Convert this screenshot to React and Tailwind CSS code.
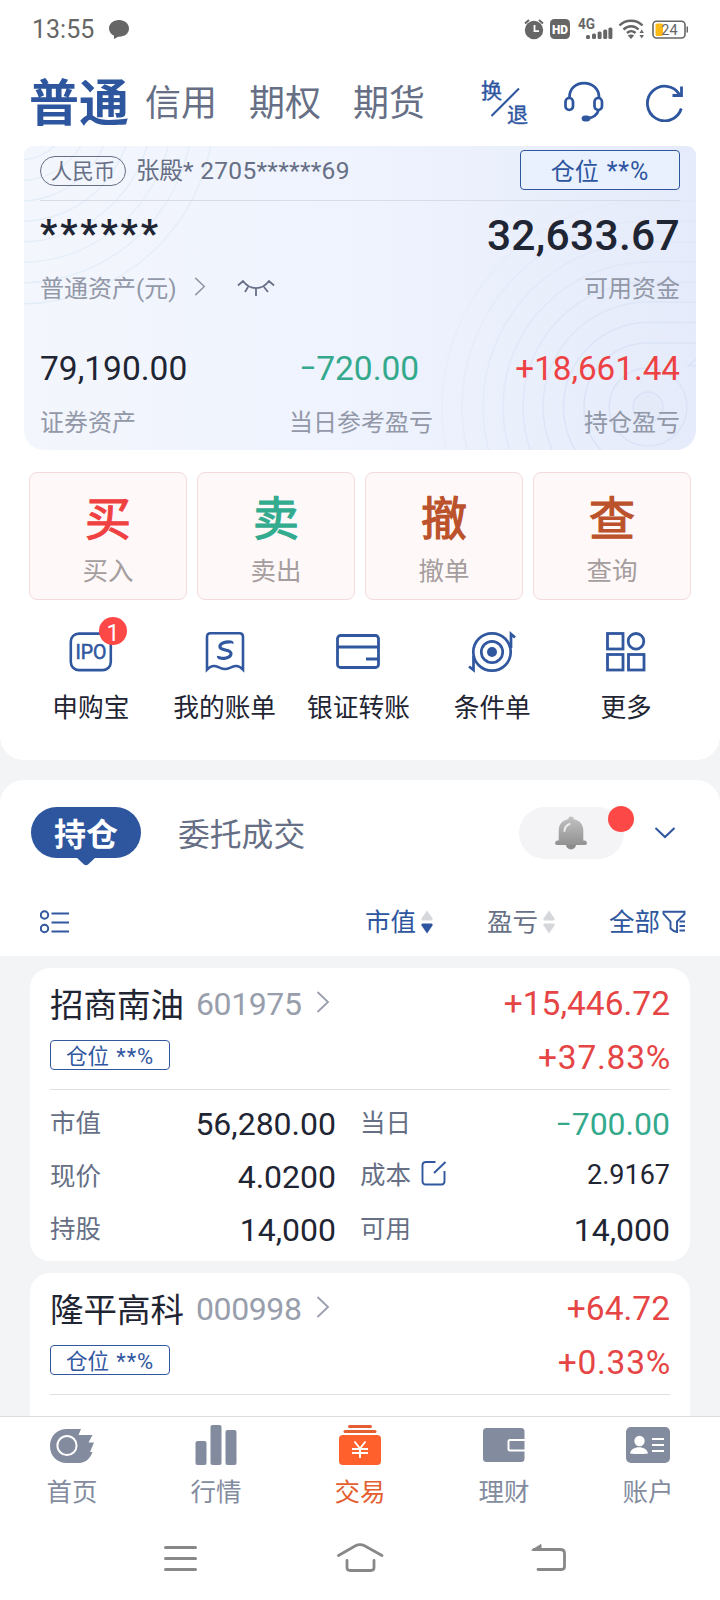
const Minus = () => (
  <span className="inline-block w-[0.46em] text-left">
    <span className="inline-block origin-left scale-x-150 -translate-y-[2px]">-</span>
  </span>
);

const Amount = ({ value }) =>
  value.startsWith('-') ? (
    <>
      <Minus />
      {value.slice(1)}
    </>
  ) : (
    value
  );

const ChevronRight = ({ className }) => (
  <svg viewBox="0 0 14 24" fill="none" stroke="currentColor" strokeWidth="1.8" className={className}>
    <path d="M1.5 2 L12 12 L1.5 22" />
  </svg>
);

const StatusBar = () => (
  <div className="flex h-[58px] items-center justify-between pl-8 pr-8 text-[#666]">
    <div className="flex items-center">
      <span className="text-[25px] leading-none">13:55</span>
      <svg viewBox="0 0 22 21" className="ml-[14px] h-[21px] w-[22px]" fill="currentColor">
        <path d="M11 1C5 1 1 4.800 1 9.500c0 3.300 2 5.800 5 7.300V20l4.200-2.300C16.500 18 21 14.500 21 9.500 21 4.800 17 1 11 1z" />
      </svg>
    </div>
    <svg viewBox="0 0 166 24" className="h-6 w-[166px]" fill="currentColor">
      <circle cx="12" cy="13" r="9.200" />
      <path d="M3 6.500l4-3.500M21 6.500l-4-3.500" stroke="currentColor" strokeWidth="2" />
      <path d="M12.500 8v6.200h4.500" fill="none" stroke="#fff" strokeWidth="1.800" />
      <rect x="28" y="2" width="20" height="20" rx="4.500" />
      <text x="38" y="16.600" fill="#fff" fontSize="13" fontWeight="900" textAnchor="middle" textLength="16" lengthAdjust="spacingAndGlyphs">HD</text>
      <text x="56" y="11.800" fontSize="14" fontWeight="700" textLength="17" lengthAdjust="spacingAndGlyphs">4G</text>
      <rect x="64" y="18" width="4" height="4" rx="1.500" />
      <rect x="70" y="16.500" width="4" height="5.500" rx="1.500" />
      <rect x="75.600" y="14.500" width="4" height="7.500" rx="1.500" />
      <rect x="81.200" y="12.500" width="4" height="9.500" rx="1.500" />
      <rect x="86.400" y="10.500" width="4" height="11.500" rx="1.500" />
      <g fill="none" stroke="currentColor" strokeWidth="2.500">
        <path d="M97.500 8.500C103.500 2 114.500 2 120.500 8.500" />
        <path d="M101.500 12.500C106 8 112.500 8 116.500 12.500" />
        <path d="M105 16C107.500 13.700 111 13.700 113.500 16" />
      </g>
      <path d="M109 22l-3.200-3.500c2-1.500 4.400-1.500 6.400 0z" />
      <path d="M117.500 16l2.200-3.500 2.200 3.500zM117.500 18l2.200 3.500 2.200-3.500z" />
      <rect x="131" y="4.200" width="32" height="16.800" rx="3.500" fill="none" stroke="currentColor" strokeWidth="1.600" />
      <rect x="133.500" y="6.500" width="7.500" height="12.500" rx="1.500" fill="#fdb915" />
      <path d="M165.300 9.500v6" stroke="currentColor" strokeWidth="1.500" />
      <text x="147.500" y="17.800" fontSize="14.500" textAnchor="middle">24</text>
    </svg>
  </div>
);

const Header = () => (
  <div className="flex h-[88px] items-center pl-[29px] pr-9 text-[#666f85]">
    <span className="mt-[3px] text-[50px] font-bold leading-none text-[#2e569f]">普通</span>
    <span className="ml-4 mt-1 text-[36px] leading-none">信用</span>
    <span className="ml-8 mt-1 text-[36px] leading-none">期权</span>
    <span className="ml-8 mt-1 text-[36px] leading-none">期货</span>
    <div className="ml-auto flex items-center text-[#2e569f]">
      <svg viewBox="0 0 54 50" className="-mr-1 h-[50px] w-[54px]" fill="currentColor" stroke="currentColor">
        <text x="0" y="21" fontSize="21" strokeWidth="0.400">换</text>
        <text x="26" y="45" fontSize="21" strokeWidth="0.400">退</text>
        <path d="M10.500 39 L38 11.500" strokeWidth="2" />
      </svg>
      <svg viewBox="0 0 40 42" className="ml-[33px] h-[42px] w-10" fill="none" stroke="currentColor" strokeWidth="2.700">
        <path d="M5.500 17V16C5.500 8 11.500 2.200 20 2.200S35 8 35 16v1" />
        <rect x="1.500" y="17" width="7.500" height="12" rx="3.700" />
        <rect x="30.500" y="17" width="7.500" height="12" rx="3.700" />
        <path d="M34.500 29C33.500 34 29 36.500 23 37.500" />
        <rect x="18" y="35" width="8" height="5" rx="2.500" fill="currentColor" strokeWidth="1" />
      </svg>
      <svg viewBox="0 0 38 40" className="ml-[42px] h-10 w-[38px]" fill="none" stroke="currentColor" strokeWidth="2.800">
        <path d="M35.300 26.500A17.300 17.300 0 1 1 33.500 12.500" />
        <path d="M35.500 4.500V13.500H26.500" />
      </svg>
    </div>
  </div>
);

const cornerRings = [50, 70.5, 91, 111.5, 132, 152.5, 173, 194];
const pitchRings = [64, 84.5, 105, 125, 145, 165, 186, 206];

const CardPattern = () => (
  <svg viewBox="0 0 672 304" className="absolute inset-0 h-full w-full" fill="none">
    <g stroke="#e3edf8" strokeWidth="1.200">
      {cornerRings.map((r) => (
        <circle key={r} cx="-4" cy="-36" r={r} />
      ))}
    </g>
    <g stroke="#dae3f6" strokeWidth="1.500">
      <circle cx="624" cy="261" r="15" fill="#e5eaf9" />
      <circle cx="624" cy="261" r="39" />
      {pitchRings.map((r, i) => (
        <path
          key={r}
          opacity={1 - i * 0.11}
          d={`M680 ${261 - r}H624A${r} ${r} 0 0 0 ${624 - r} 261A${r} ${r} 0 0 0 624 ${261 + r}`}
        />
      ))}
      <path d="M676 210L664 220H676" />
    </g>
  </svg>
);

const AssetCard = () => (
  <div className="relative mx-6 h-[304px] overflow-hidden rounded-b-[20px] rounded-t-[9px] bg-gradient-to-r from-[#f3f6fc] via-[#eff3fe] to-[#e5ebfa]">
    <CardPattern />
    <div className="relative px-4">
      <div className="flex h-[55px] items-center border-b border-[#d8dce6] pb-1.5">
        <span className="mt-0.5 flex h-[30px] w-[86px] items-center justify-center rounded-full border border-[#666f85] pt-0.5 text-[21.500px] leading-none text-[#666f85]">
          人民币
        </span>
        <span className="ml-[10px] mt-[3px] whitespace-nowrap text-[24.500px] leading-none tracking-[0.300px] text-[#666f85]">
          <span className="text-[23.500px] tracking-normal">张殿</span>* 2705******69
        </span>
        <span className="ml-auto flex h-10 w-40 items-center justify-center rounded border border-[#2e569f] bg-[#e9f1fe] pt-[3px] text-[24px] leading-none text-[#2e569f]">
          仓位&nbsp;<span className="ml-0.5 text-[25px] tracking-[0.900px]">**%</span>
        </span>
      </div>
      <div className="flex h-[70px] items-center justify-between text-[#1f2533]">
        <span className="-mt-1 text-[38px] font-bold leading-none tracking-[2.900px]">******</span>
        <span className="text-[42.500px] font-medium leading-none tracking-[0.300px]">32,633.67</span>
      </div>
      <div className="flex h-[34px] items-center text-[24px] leading-none text-[#9298a8]">
        <span className="pt-0.5">普通资产(元)</span>
        <ChevronRight className="-mt-[3px] ml-[17px] h-[21px] w-3" />
        <svg viewBox="0 0 38 18" className="ml-[31px] h-[18px] w-[38px]" fill="none" stroke="#666f85" strokeWidth="1.800">
          <path d="M1 6.500L6 2C13 11.500 25 11.500 32 2L37 6.500M11 8l-3 5M19 9.500V17M27 8l4 5" />
        </svg>
        <span className="ml-auto pt-0.5">可用资金</span>
      </div>
      <div className="mt-[44px] grid grid-cols-3 text-[33.500px] leading-10">
        <span className="text-[#1f2533]">79,190.00</span>
        <span className="text-center text-[#34a98c]"><Amount value="-720.00" /></span>
        <span className="text-right text-[33.200px] text-[#ee4144]">+18,661.44</span>
      </div>
      <div className="mt-[18px] grid grid-cols-3 text-[24px] leading-8 text-[#9298a8]">
        <span>证券资产</span>
        <span className="pl-0.5 text-center">当日参考盈亏</span>
        <span className="text-right">持仓盈亏</span>
      </div>
    </div>
  </div>
);

const actions = [
  { glyph: '买', label: '买入', color: 'text-[#f04142]' },
  { glyph: '卖', label: '卖出', color: 'text-[#33ab8f]' },
  { glyph: '撤', label: '撤单', color: 'text-[#bb522b]' },
  { glyph: '查', label: '查询', color: 'text-[#bb522b]' },
];

const TradeActions = () => (
  <div className="mx-[29px] mt-[22px] grid grid-cols-4 gap-[10px]">
    {actions.map((a) => (
      <div key={a.label} className="flex h-[128px] flex-col items-center rounded-lg border border-[#f5dadb] bg-[#fef8f8]">
        <span className={`mt-5 text-[46px] leading-[52px] [-webkit-text-stroke:1.2px_currentColor] ${a.color}`}>
          {a.glyph}
        </span>
        <span className="mt-[10px] text-[25.500px] leading-8 text-[#a59d9e]">{a.label}</span>
      </div>
    ))}
  </div>
);

const IpoIcon = () => (
  <div className="relative">
    <svg viewBox="0 0 44 40" className="h-10 w-11" fill="none" stroke="currentColor" strokeWidth="2.600">
      <rect x="1.800" y="1.600" width="40" height="36.500" rx="8" />
      <text x="22" y="27.300" fill="currentColor" strokeWidth="0.600" fontSize="21" textAnchor="middle" textLength="31" lengthAdjust="spacingAndGlyphs">IPO</text>
    </svg>
    <span className="absolute -top-[15px] left-[30px] flex size-7 items-center justify-center rounded-full bg-[#fd4848] pt-1 text-[23px] leading-none text-white">
      1
    </span>
  </div>
);

const BillIcon = () => (
  <svg viewBox="0 0 40 42" className="h-[42px] w-10" fill="none" stroke="currentColor" strokeWidth="2.600">
    <path d="M2 38.500V6Q2 2.300 5.500 2.300H34.500Q38 2.300 38 6V38.500Q34 34.500 30.500 35C26 35.700 24 38 20 38S14 35.700 9.500 35Q6 34.500 2 38.500z" />
    <path d="M27 12.500C28 9.500 14 10.500 15 16C15.500 20 26 18 26 22.500C26 28 13 29 13.500 25" strokeWidth="3.200" />
  </svg>
);

const BankIcon = () => (
  <svg viewBox="0 0 44 36" className="h-9 w-11" fill="none" stroke="currentColor" strokeWidth="2.800">
    <rect x="1.500" y="1.500" width="41" height="32" rx="3" />
    <path d="M1.500 13H42.500M42.500 25H30" />
  </svg>
);

const ConditionIcon = () => (
  <svg viewBox="0 0 48 42" className="h-[42px] w-12" fill="none" stroke="currentColor" strokeWidth="2.700">
    <circle cx="24" cy="21" r="18.700" />
    <circle cx="24" cy="21" r="10.700" />
    <circle cx="24" cy="21" r="5" fill="currentColor" stroke="none" />
    <path d="M43 17V3L47 6.500M5.500 25V39L1 35.500" />
  </svg>
);

const MoreIcon = () => (
  <svg viewBox="0 0 40 40" className="size-10" fill="none" stroke="currentColor" strokeWidth="2.800">
    <rect x="1.500" y="1.500" width="15.500" height="15.500" />
    <circle cx="30" cy="9.300" r="7.800" />
    <rect x="1.500" y="22.500" width="15.500" height="15.500" />
    <rect x="22.500" y="22.500" width="15.500" height="15.500" />
  </svg>
);

const shortcuts = [
  { label: '申购宝', Icon: IpoIcon },
  { label: '我的账单', Icon: BillIcon },
  { label: '银证转账', Icon: BankIcon },
  { label: '条件单', Icon: ConditionIcon },
  { label: '更多', Icon: MoreIcon },
];

const Shortcuts = () => (
  <div className="mx-6 mt-7 grid grid-cols-5 pr-[3px]">
    {shortcuts.map(({ label, Icon }) => (
      <div key={label} className="flex flex-col items-center">
        <div className="flex h-12 items-center text-[#31579f]">
          <Icon />
        </div>
        <span className="mt-[14px] whitespace-nowrap text-[25.700px] leading-9 text-[#1f2533]">{label}</span>
      </div>
    ))}
  </div>
);

const SortArrows = ({ down }) => (
  <svg viewBox="0 0 14 24" className="ml-1 h-6 w-[14px]" fill="#d6d7da">
    <path d="M7 0.500L12.500 8.500Q13 10.500 11.500 10.500H2.500Q1 10.500 1.500 8.500z" />
    <path d="M7 23.500L12.500 15.500Q13 13.500 11.500 13.500H2.500Q1 13.500 1.500 15.500z" fill={down ? '#2e569f' : '#d6d7da'} />
  </svg>
);

const BellIcon = () => (
  <svg viewBox="0 0 32 34" className="h-[34px] w-8">
    <defs>
      <linearGradient id="bell" x1="0" y1="0" x2="0" y2="1">
        <stop offset="0" stopColor="#c2c2c3" />
        <stop offset="1" stopColor="#929293" />
      </linearGradient>
    </defs>
    <circle cx="16" cy="28.500" r="5" fill="#8b8b8c" />
    <path d="M16 0.500c1.700 0 2.600 1 2.800 2.800C25 4.500 28.300 9 28.300 14.500V24.500H30Q32 25 32 27T30 29H2Q0 29 0 27T2 24.500H3.700V14.500C3.700 9 7 4.500 13.200 3.300C13.400 1.500 14.300 0.500 16 0.500z" fill="url(#bell)" />
    <path d="M9.500 15C9.500 11.500 11 9.500 14.500 8" fill="none" stroke="#eee" strokeWidth="2" strokeLinecap="round" />
  </svg>
);

const PositionTabs = () => (
  <div className="mt-5 h-[176px] rounded-t-3xl bg-white pt-[27px]">
    <div className="flex h-[52px] items-center pl-[31px] pr-[44px]">
      <div className="relative -mt-px flex h-[51px] w-[110px] items-center justify-center rounded-full bg-[#2e569f] pt-1 text-[32px] font-bold leading-none text-white">
        持仓
        <svg viewBox="0 0 20 9" className="absolute left-[45px] top-[50px] h-[9px] w-5" fill="#2e569f">
          <path d="M0 0H20L12 7.500Q10 9 8 7.500z" />
        </svg>
      </div>
      <span className="ml-[37px] pt-[5px] text-[31.800px] leading-none text-[#666f85]">委托成交</span>
      <div className="relative ml-auto flex h-[52px] w-[105px] items-center justify-center rounded-full bg-[#f4f4f6] pr-0.5">
        <BellIcon />
        <span className="absolute -right-[10px] -top-px size-[26px] rounded-full bg-[#fd4848]" />
      </div>
      <svg viewBox="0 0 22 12" className="ml-[30px] h-3 w-[22px]" fill="none" stroke="#2e569f" strokeWidth="2">
        <path d="M1.500 1L11 10L20.500 1" />
      </svg>
    </div>
    <div className="mt-[46px] flex h-[34px] items-center pl-10 pr-[34px] text-[25.500px] leading-none text-[#666f85]">
      <svg viewBox="0 0 30 24" className="h-6 w-[30px]" fill="none" stroke="#31579f" strokeWidth="2">
        <circle cx="4.500" cy="5" r="3.700" />
        <circle cx="4.500" cy="18.500" r="3.700" />
        <path d="M11.500 3.500H29M11.500 12.500H29M11.500 21.500H29" />
      </svg>
      <span className="ml-auto flex items-center text-[#2e569f]"><span className="pt-0.5">市值</span><SortArrows down /></span>
      <span className="ml-[53px] flex items-center"><span className="pt-0.5">盈亏</span><SortArrows /></span>
      <span className="ml-[53px] flex items-center text-[#2e569f]">
        <span className="pt-0.5">全部</span>
        <svg viewBox="0 0 24 24" className="ml-[2px] h-6 w-6" fill="none" stroke="#31579f" strokeWidth="1.900">
          <path d="M1.500 1.800H22.500V4L15 11.500V22Q11.500 21.500 8.500 18.500V11.500L1.500 4z" />
          <path d="M17.500 11.500H23M17.500 16H23M17.500 20.500H23" />
        </svg>
      </span>
    </div>
  </div>
);

const EditIcon = () => (
  <svg viewBox="0 0 26 26" className="-mt-1.5 ml-[10px] h-[26px] w-[26px]" fill="none" stroke="#31579f" strokeWidth="1.900">
    <path d="M14.500 2H5Q1.500 2 1.500 5V21Q1.500 24.500 5 24.500H20.500Q23.500 24.500 23.500 21V11" />
    <path d="M13 13L24.500 2" />
  </svg>
);

const Cell = ({ label, value, children, small }) => (
  <div className="flex h-[53px] items-center justify-between">
    <span className={`flex items-center text-[25.500px] leading-none text-[#666f85] ${small ? '-mt-1' : '-mt-px'}`}>
      {label}
      {children}
    </span>
    <span className={`leading-none ${small ? '-mt-1 text-[27px]' : '-mt-0.5 text-[32px]'} ${value.startsWith('-') ? 'text-[#34a98c]' : 'text-[#1f2533]'}`}>
      <Amount value={value} />
    </span>
  </div>
);

const HoldingCard = ({ name, code, profit, rate, children }) => (
  <div className="mx-[30px] mt-3 rounded-[20px] bg-white px-5">
    <div className="flex h-[122px] justify-between border-b border-[#dddfe3] pt-[18px]">
      <div>
        <div className="flex h-9 items-center">
          <span className="pt-[3px] text-[33.500px] leading-none text-[#1f2533]">{name}</span>
          <span className="ml-3 text-[32px] leading-none tracking-[-0.400px] text-[#989eac]">{code}</span>
          <ChevronRight className="mb-1 ml-[14px] h-6 w-[14px] text-[#989eac]" />
        </div>
        <span className="mt-[18px] flex h-[30px] w-[120px] items-center justify-center rounded border border-[#31579f] pt-[3px] text-[21.500px] leading-none text-[#31579f]">
          仓位&nbsp;<span className="ml-0.5 text-[22px] tracking-[0.900px]">**%</span>
        </span>
      </div>
      <div className="text-right text-[33.500px] leading-[54px] text-[#e64545]">
        <div className="-mt-[9px]">{profit}</div>
        <div className="-mr-px tracking-[0.750px]">{rate}</div>
      </div>
    </div>
    {children}
  </div>
);

const Holdings = () => (
  <div className="h-[460px] overflow-hidden">
    <HoldingCard name="招商南油" code="601975" profit="+15,446.72" rate="+37.83%">
      <div className="grid grid-cols-[286px_310px] gap-x-6 pb-[4px] pt-2">
        <Cell label="市值" value="56,280.00" />
        <Cell label="当日" value="-700.00" />
        <Cell label="现价" value="4.0200" />
        <Cell label="成本" value="2.9167" small>
          <EditIcon />
        </Cell>
        <Cell label="持股" value="14,000" />
        <Cell label="可用" value="14,000" />
      </div>
    </HoldingCard>
    <HoldingCard name="隆平高科" code="000998" profit="+64.72" rate="+0.33%">
      <div className="h-[40px]" />
    </HoldingCard>
  </div>
);

const HomeIcon = () => (
  <svg viewBox="0 0 44 42" className="h-[42px] w-11" fill="currentColor">
    <path d="M17 4H31L28.500 10H42.500L38.500 17.500H44L40 27H42.500C40 34 35 38 29 38H17C7 38 0 31 0 21S7 4 17 4z" />
    <circle cx="17" cy="20.500" r="9.600" fill="none" stroke="#fff" strokeWidth="2" />
  </svg>
);

const QuotesIcon = () => (
  <svg viewBox="0 0 42 42" className="h-[42px] w-[42px]" fill="currentColor">
    <rect x="0.500" y="16" width="11" height="24" rx="2" />
    <rect x="15.500" y="0" width="11" height="40" rx="2" />
    <rect x="30.500" y="5" width="11" height="35" rx="2" />
  </svg>
);

const TradeIcon = () => (
  <svg viewBox="0 0 42 42" className="h-[42px] w-[42px]">
    <rect x="9" y="0" width="24" height="3" rx="1.500" fill="#e35f31" />
    <rect x="4.500" y="5" width="33" height="3" rx="1.500" fill="#e35f31" />
    <rect x="0" y="10" width="42" height="30" rx="4" fill="#ff602c" />
    <path d="M15.500 16.500L21 23.500L26.500 16.500M21 23.500V33M13 24H29M13 28H29" fill="none" stroke="#fff" strokeWidth="1.900" />
  </svg>
);

const WealthIcon = () => (
  <svg viewBox="0 0 42 42" className="h-[42px] w-[42px]">
    <rect x="0" y="3" width="41.500" height="34" rx="3.500" fill="currentColor" />
    <path d="M42 15H27Q25.500 15 25.500 16.500V24Q25.500 25.500 27 25.500H42" fill="none" stroke="#fff" strokeWidth="2" />
  </svg>
);

const AccountIcon = () => (
  <svg viewBox="0 0 44 42" className="h-[42px] w-11">
    <rect x="0" y="2" width="44" height="36" rx="5" fill="currentColor" />
    <circle cx="13.500" cy="16" r="5.200" fill="#fff" />
    <path d="M4 28.500C5 20 21 20 22 28.500Q13 29.500 4 28.500z" fill="#fff" />
    <path d="M26 14H38M26 20H38M26 26H38" stroke="#fff" strokeWidth="2" />
  </svg>
);

const tabs = [
  { label: '首页', Icon: HomeIcon },
  { label: '行情', Icon: QuotesIcon },
  { label: '交易', Icon: TradeIcon, active: true },
  { label: '理财', Icon: WealthIcon },
  { label: '账户', Icon: AccountIcon },
];

const TabBar = () => (
  <div className="grid h-[100px] grid-cols-5 border-t border-[#dcdde1] bg-white pt-2">
    {tabs.map(({ label, Icon, active }) => (
      <div key={label} className={`flex flex-col items-center ${active ? 'text-[#e35f31]' : 'text-[#838b9e]'}`}>
        <Icon />
        <span className="mt-[7px] text-[25.500px] leading-9">{label}</span>
      </div>
    ))}
  </div>
);

const SystemNav = () => (
  <div className="flex h-[84px] items-start bg-white pt-[25px] text-[#888]">
    <svg viewBox="0 0 34 34" className="ml-[164px] h-[34px] w-[34px]" fill="none" stroke="currentColor" strokeWidth="3" strokeLinecap="round">
      <path d="M1.500 6.500H31.500M1.500 17.500H31.500M1.500 28.500H31.500" />
    </svg>
    <svg viewBox="0 0 48 34" className="ml-[138px] h-[34px] w-12" fill="none" stroke="currentColor" strokeWidth="2.800" strokeLinecap="round">
      <path d="M2.500 14.500L19.500 4.700Q24 2.500 28.500 4.700L46 14.500" />
      <path d="M11 19.500V26.500Q11 29.500 14 29.500H35Q38 29.500 38 26.500V19.500" />
    </svg>
    <svg viewBox="0 0 36 34" className="ml-[147px] h-[34px] w-9" fill="none" stroke="currentColor" strokeWidth="2.800" strokeLinecap="round">
      <path d="M3 8.500H29Q33.500 8.500 33.500 12V25.500Q33.500 28.500 30.500 28.500H7" />
      <path d="M1 9L10 3.500V9z" fill="currentColor" strokeWidth="1" />
    </svg>
  </div>
);

export default function App() {
  return (
    <div className="h-[1600px] w-[720px] overflow-hidden bg-[#f3f4f6] font-['Roboto','Noto_Sans_CJK_SC',sans-serif]">
      <div className="h-[760px] rounded-b-3xl bg-white">
        <StatusBar />
        <Header />
        <AssetCard />
        <TradeActions />
        <Shortcuts />
      </div>
      <PositionTabs />
      <Holdings />
      <TabBar />
      <SystemNav />
    </div>
  );
}
